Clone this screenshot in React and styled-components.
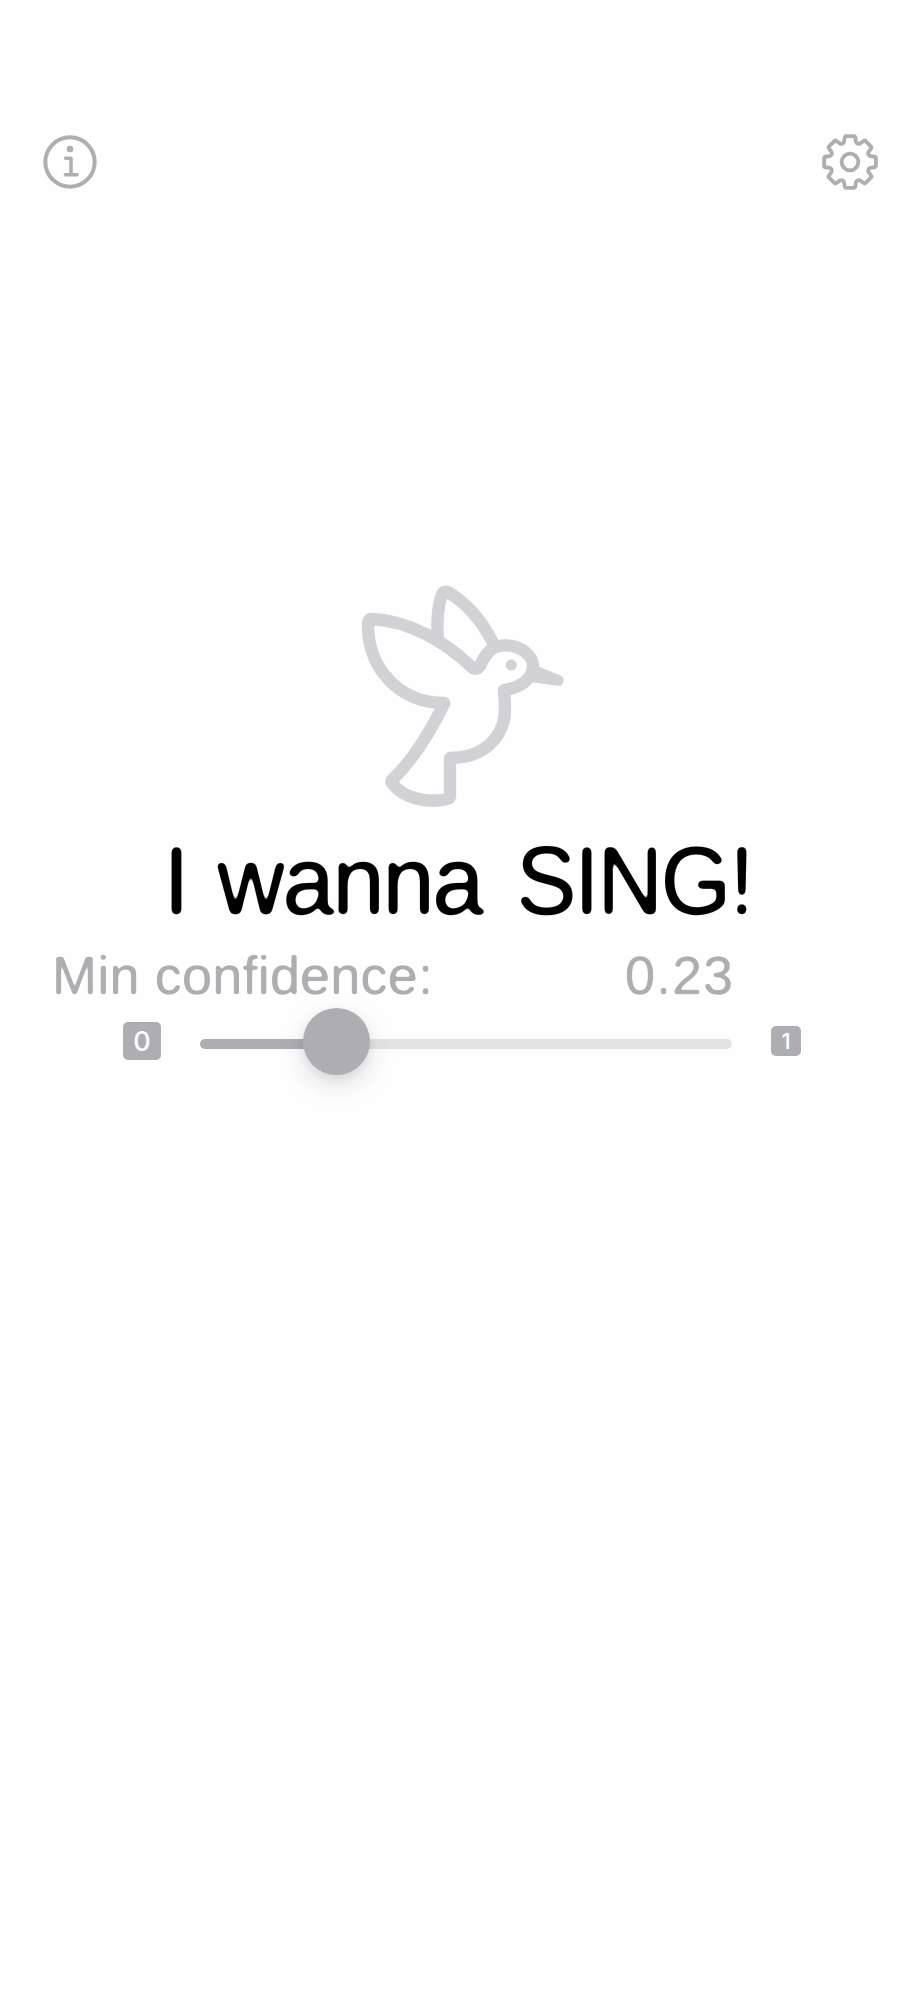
import React, { useState } from "react";
import styled, { createGlobalStyle } from "styled-components";

const gray = "#aeaeb2";

// Outline of the settings cog, eight teeth around 0,0
const cogPath = () => {
  const points = [];
  for (let tooth = 0; tooth < 8; tooth++) {
    [
      [-18, 60],
      [-11, 79],
      [11, 79],
      [18, 60],
    ].forEach(([offset, radius]) => {
      const angle = ((tooth * 45 + offset) * Math.PI) / 180;
      points.push([Math.sin(angle) * radius, -Math.cos(angle) * radius]);
    });
  }
  const toward = (a, b, d) => {
    const length = Math.hypot(b[0] - a[0], b[1] - a[1]);
    return [a[0] + ((b[0] - a[0]) * d) / length, a[1] + ((b[1] - a[1]) * d) / length];
  };
  return (
    points
      .map((p, i) => {
        const before = points[(i + points.length - 1) % points.length];
        const after = points[(i + 1) % points.length];
        return `${i ? "L" : "M"}${toward(p, before, 4)} Q${p} ${toward(p, after, 4)}`;
      })
      .join(" ") + "Z"
  );
};

const InfoIcon = () => (
  <svg width="54" height="54" viewBox="-81 -81 162 162" fill="none" stroke={gray}>
    <circle r="74" strokeWidth="12" />
    <circle cy="-39" r="10" fill={gray} stroke="none" />
    <path d="M-13 -11H3V38M-14 38H21" strokeWidth="10.5" strokeLinecap="round" strokeLinejoin="round" />
  </svg>
);

const CogIcon = () => (
  <svg width="58" height="58" viewBox="-87 -87 174 174" fill="none" stroke={gray}>
    <path d={cogPath()} strokeWidth="11.5" strokeLinejoin="round" />
    <circle r="25" strokeWidth="11.5" />
  </svg>
);

const Bird = () => (
  <svg width="225" height="240" viewBox="0 0 675 720" fill="none" stroke="#d1d1d6">
    <g strokeWidth="37" strokeLinecap="round" strokeLinejoin="round">
      <path d="M364 275C285 200 180 138 66 132Q54 131 54 145C52 282 150 384 283 384C241 470 190 555 126 615Q122 620 128 627C160 668 230 687 291 672Q300 670 300 662V549C398 549 465 490 465 400C465 375 462 362 462 345C510 339 549 312 549 274C549 240 511 211 465 211C425 211 407 237 393 267Q380 291 364 275Z" />
      <path d="M263 190C260 135 264 91 276 58Q282 46 295 52C350 84 397 142 428 201" />
    </g>
    <path d="M560 272L630 301A16 16 0 0 1 623 332L540 321Z" fill="#d1d1d6" stroke="none" />
    <circle cx="484" cy="270" r="16.5" fill="#d1d1d6" stroke="none" />
  </svg>
);

// Softens the square ends of the letters
const RoundFilter = ({ id, radius }) => (
  <filter id={id} colorInterpolationFilters="sRGB">
    <feGaussianBlur stdDeviation={radius} />
    <feComponentTransfer>
      <feFuncA type="linear" slope={radius * 2.6} intercept={0.6 - radius * 1.2} />
    </feComponentTransfer>
  </filter>
);

const App = () => {
  const [confidence] = useState(0.23);
  return (
    <Page>
      <GlobalStyle />
      <Filters>
        <RoundFilter id="round-large" radius={2.4} />
        <RoundFilter id="round-small" radius={1.3} />
      </Filters>
      <Toolbar>
        <IconButton aria-label="Info">
          <InfoIcon />
        </IconButton>
        <IconButton aria-label="Settings">
          <CogIcon />
        </IconButton>
      </Toolbar>
      <Logo>
        <Bird />
      </Logo>
      <Title>
        I <Word $stretch={0.967}>wanna</Word> <Word $stretch={0.935} $shift={-5}>SING!</Word>
      </Title>
      <Labels>
        <Label>Min confidence:</Label>
        <Value>{confidence.toFixed(2)}</Value>
      </Labels>
      <SliderRow>
        <Badge $size={38}>0</Badge>
        <Track>
          <Fill style={{ width: `${confidence * 100}%` }} />
          <Knob />
        </Track>
        <Badge $size={30}>1</Badge>
      </SliderRow>
    </Page>
  );
};

const GlobalStyle = createGlobalStyle`
  * {
    box-sizing: border-box;
  }
  body {
    margin: 0;
    background: #fefefe;
    font-family: "Liberation Sans", Arial, sans-serif;
  }
`;

const Page = styled.main`
  display: flex;
  flex-direction: column;
  width: 923px;
  height: 2000px;
  padding-top: 133px;
  overflow: hidden;
  background: #fefefe;
`;

const Filters = styled.svg`
  position: absolute;
  width: 0;
  height: 0;
`;

const Toolbar = styled.header`
  display: flex;
  align-items: center;
  justify-content: space-between;
  height: 58px;
  padding: 0 44px 0 43px;
`;

const IconButton = styled.button`
  display: flex;
  padding: 0;
  border: none;
  background: none;
`;

const Logo = styled.div`
  display: flex;
  height: 240px;
  margin: 384px 0 0 350px;
`;

const Title = styled.h1`
  height: 110px;
  margin: 11px 0 0 163px;
  color: #000;
  font-size: 97px;
  font-weight: 400;
  line-height: 110px;
  letter-spacing: -2.3px;
  word-spacing: 5px;
  white-space: nowrap;
  filter: url(#round-large);
`;

const Word = styled.span`
  display: inline-block;
  margin-left: ${({ $shift = 0 }) => $shift}px;
  transform: scaleX(${({ $stretch }) => $stretch});
  transform-origin: left;
`;

const Labels = styled.div`
  display: flex;
  align-items: center;
  height: 62px;
  margin-top: 8px;
  padding-left: 52px;
  color: ${gray};
  font-size: 54px;
  line-height: 62px;
  white-space: nowrap;
`;

const Label = styled.span`
  width: 573px;
  letter-spacing: 0.2px;
  filter: url(#round-small);
`;

const Value = styled.span`
  letter-spacing: 1px;
  filter: url(#round-small);
`;

const SliderRow = styled.div`
  display: flex;
  align-items: center;
  justify-content: space-between;
  height: 68px;
  margin-top: 1px;
  padding: 0 122px 0 123px;
`;

const Badge = styled.span`
  display: flex;
  align-items: center;
  justify-content: center;
  width: ${({ $size }) => $size}px;
  height: ${({ $size }) => $size}px;
  border-radius: 5px;
  background: ${gray};
  color: #fff;
  font-family: Inter, sans-serif;
  font-size: ${({ $size }) => ($size > 30 ? 27 : 22)}px;
  font-weight: 500;
  line-height: 1;
`;

const Track = styled.div`
  display: flex;
  align-items: center;
  width: 532px;
  height: 10px;
  margin-top: 6px;
  border-radius: 5px;
  background: #e3e3e5;
`;

const Fill = styled.div`
  height: 10px;
  border-radius: 5px 0 0 5px;
  background: ${gray};
`;

const Knob = styled.div`
  flex: none;
  width: 67px;
  height: 67px;
  margin: -5px 0 0 -19px;
  border-radius: 50%;
  background: ${gray};
  box-shadow: 0 10px 28px rgba(0, 0, 0, 0.13), 0 4px 8px rgba(0, 0, 0, 0.06);
`;

export default App;
